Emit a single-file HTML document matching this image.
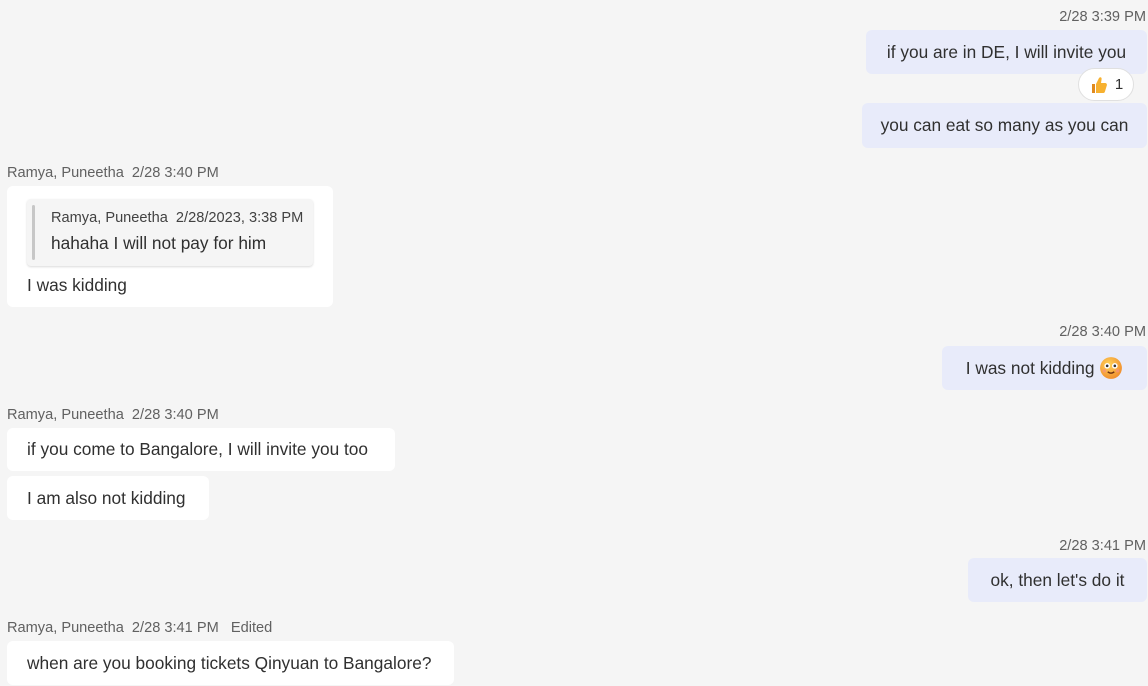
<!DOCTYPE html>
<html><head><meta charset="utf-8"><style>
*{margin:0;padding:0;box-sizing:border-box}
body{width:1148px;height:686px;background:#f5f5f5;font-family:"Liberation Sans",sans-serif;color:#303030;position:relative;overflow:hidden}
.a{position:absolute;white-space:nowrap}
.meta{font-size:14.6px;color:#616161}
.b{position:absolute;border-radius:6px;font-size:17.3px;display:flex;align-items:center;white-space:nowrap;padding-top:0}
.me{background:#e8ebfa;justify-content:center}
.th{background:#fff;padding-left:20px}
.t{font-size:17.3px}
</style></head><body>
<div class="a meta" style="right:2px;top:9px">2/28 3:39 PM</div>
<div class="b me" style="left:866px;top:30px;width:281px;height:44px">if you are in DE, I will invite you</div>
<div class="a" style="left:1078px;top:68px;width:56px;height:33px;background:#fff;border:1px solid #e0e0e0;border-radius:17px;display:flex;align-items:center;justify-content:center;gap:6px;font-size:15px">
<svg width="20" height="20" viewBox="0 0 20 20"><path d="M3 9h3v9H3z" fill="#e08a1e"/><path d="M7 9l3-6c1-1.5 3-.8 2.6 1.2L12 8h4c1.5 0 2.2 1.3 1.8 2.5l-2 6.5c-.3.8-1 1-1.8 1H7z" fill="#f7b130"/></svg><span>1</span></div>
<div class="b me" style="left:862px;top:103px;width:285px;height:45px">you can eat so many as you can</div>

<div class="a meta" style="left:7px;top:165px">Ramya, Puneetha&nbsp;&nbsp;2/28 3:40 PM</div>
<div class="a" style="left:7px;top:186px;width:326px;height:121px;background:#fff;border-radius:6px"></div>
<div class="a" style="left:27px;top:199px;width:286px;height:67px;background:#f5f5f5;border-radius:4px;box-shadow:0 1px 2px rgba(0,0,0,.15)"></div>
<div class="a" style="left:32px;top:205px;width:3px;height:55px;background:#c7c7c7;border-radius:2px"></div>
<div class="a meta" style="left:51px;top:210px;color:#424242">Ramya, Puneetha&nbsp;&nbsp;2/28/2023, 3:38 PM</div>
<div class="a t" style="left:51px;top:233px">hahaha I will not pay for him</div>
<div class="a t" style="left:27px;top:275px">I was kidding</div>

<div class="a meta" style="right:2px;top:324px">2/28 3:40 PM</div>
<div class="b me" style="left:942px;top:346px;width:205px;height:44px">I was not kidding&nbsp;
<svg width="24" height="24" viewBox="0 0 22 22"><defs><radialGradient id="g" cx="40%" cy="35%" r="70%"><stop offset="0" stop-color="#ffd45a"/><stop offset="1" stop-color="#f08a2a"/></radialGradient></defs><circle cx="11" cy="11" r="10" fill="url(#g)"/><circle cx="7.5" cy="9" r="2.6" fill="#fff"/><circle cx="14.5" cy="9" r="2.6" fill="#fff"/><circle cx="7.5" cy="9" r="1.2" fill="#333"/><circle cx="14.5" cy="9" r="1.2" fill="#333"/><path d="M8 14.5q3 2.5 6 0" stroke="#6b2f10" stroke-width="1.3" fill="none"/><circle cx="5" cy="13.5" r="1.6" fill="#f58b8b" opacity=".6"/><circle cx="17" cy="13.5" r="1.6" fill="#f58b8b" opacity=".6"/></svg></div>

<div class="a meta" style="left:7px;top:407px">Ramya, Puneetha&nbsp;&nbsp;2/28 3:40 PM</div>
<div class="b th" style="left:7px;top:428px;width:388px;height:43px">if you come to Bangalore, I will invite you too</div>
<div class="b th" style="left:7px;top:476px;width:202px;height:44px">I am also not kidding</div>

<div class="a meta" style="right:2px;top:538px">2/28 3:41 PM</div>
<div class="b me" style="left:968px;top:558px;width:179px;height:44px">ok, then let's do it</div>

<div class="a meta" style="left:7px;top:620px">Ramya, Puneetha&nbsp;&nbsp;2/28 3:41 PM&nbsp;&nbsp;&nbsp;Edited</div>
<div class="b th" style="left:7px;top:641px;width:447px;height:44px">when are you booking tickets Qinyuan to Bangalore?</div>
</body></html>
